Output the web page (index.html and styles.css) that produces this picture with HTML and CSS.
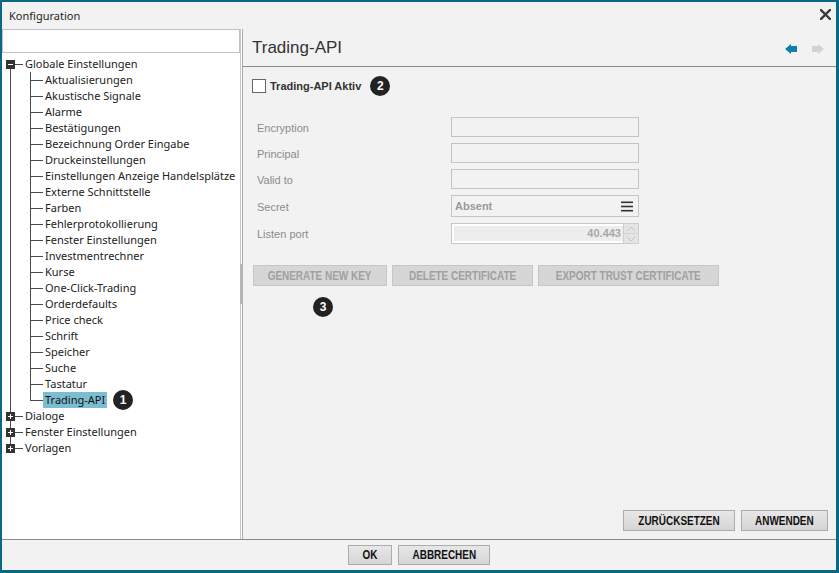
FILE: index.html
```html
<!DOCTYPE html>
<html lang="de">
<head>
<meta charset="utf-8">
<title>Konfiguration</title>
<link rel="stylesheet" href="styles.css">
</head>
<body>
<div class="window">
  <div class="titlebar">
    <span class="title">Konfiguration</span>
    <span class="close" aria-label="Schließen">
      <svg width="11" height="11" viewBox="0 0 11 11"><path d="M1 1 L10 10 M10 1 L1 10" stroke="#3a3a3a" stroke-width="2.4" stroke-linecap="square"/></svg>
    </span>
  </div>
  <div class="main">
    <aside class="left">
      <input class="search" type="text">
      <ul class="tree">
        <li>
          <div class="row"><span class="toggle minus"></span><span class="conn root-conn"></span><span class="label">Globale Einstellungen</span></div>
          <ul class="children">
            <li><div class="row"><span class="conn child-conn"></span><span class="label">Aktualisierungen</span></div></li>
            <li><div class="row"><span class="conn child-conn"></span><span class="label">Akustische Signale</span></div></li>
            <li><div class="row"><span class="conn child-conn"></span><span class="label">Alarme</span></div></li>
            <li><div class="row"><span class="conn child-conn"></span><span class="label">Bestätigungen</span></div></li>
            <li><div class="row"><span class="conn child-conn"></span><span class="label">Bezeichnung Order Eingabe</span></div></li>
            <li><div class="row"><span class="conn child-conn"></span><span class="label">Druckeinstellungen</span></div></li>
            <li><div class="row"><span class="conn child-conn"></span><span class="label">Einstellungen Anzeige Handelsplätze</span></div></li>
            <li><div class="row"><span class="conn child-conn"></span><span class="label">Externe Schnittstelle</span></div></li>
            <li><div class="row"><span class="conn child-conn"></span><span class="label">Farben</span></div></li>
            <li><div class="row"><span class="conn child-conn"></span><span class="label">Fehlerprotokollierung</span></div></li>
            <li><div class="row"><span class="conn child-conn"></span><span class="label">Fenster Einstellungen</span></div></li>
            <li><div class="row"><span class="conn child-conn"></span><span class="label">Investmentrechner</span></div></li>
            <li><div class="row"><span class="conn child-conn"></span><span class="label">Kurse</span></div></li>
            <li><div class="row"><span class="conn child-conn"></span><span class="label">One-Click-Trading</span></div></li>
            <li><div class="row"><span class="conn child-conn"></span><span class="label">Orderdefaults</span></div></li>
            <li><div class="row"><span class="conn child-conn"></span><span class="label">Price check</span></div></li>
            <li><div class="row"><span class="conn child-conn"></span><span class="label">Schrift</span></div></li>
            <li><div class="row"><span class="conn child-conn"></span><span class="label">Speicher</span></div></li>
            <li><div class="row"><span class="conn child-conn"></span><span class="label">Suche</span></div></li>
            <li><div class="row"><span class="conn child-conn"></span><span class="label">Tastatur</span></div></li>
            <li><div class="row"><span class="conn child-conn"></span><span class="label selected">Trading-API</span><span class="badge badge-tree">1</span></div></li>
          </ul>
        </li>
        <li><div class="row"><span class="toggle plus"></span><span class="conn root-conn"></span><span class="label">Dialoge</span></div></li>
        <li><div class="row"><span class="toggle plus"></span><span class="conn root-conn"></span><span class="label">Fenster Einstellungen</span></div></li>
        <li><div class="row"><span class="toggle plus"></span><span class="conn root-conn"></span><span class="label">Vorlagen</span></div></li>
      </ul>
    </aside>
    <div class="splitter"><div class="handle"></div></div>
    <section class="right">
      <header class="rhead">
        <h1 class="rtitle">Trading-API</h1>
        <div class="nav">
          <svg class="arrow" width="12" height="10" viewBox="0 0 12 10"><path d="M0 5 L6 0 L6 2 L12 2 L12 8 L6 8 L6 10 Z" fill="#0a80b0"/></svg>
          <svg class="arrow" width="12" height="10" viewBox="0 0 12 10"><path d="M12 5 L6 0 L6 2 L0 2 L0 8 L6 8 L6 10 Z" fill="#d2d2d2"/></svg>
        </div>
      </header>
      <div class="content">
        <div class="check-row">
          <span class="checkbox"></span>
          <span class="check-label">Trading-API Aktiv</span>
          <span class="badge badge-check">2</span>
        </div>
        <div class="form">
          <span class="flabel">Encryption</span><span class="field"></span>
          <span class="flabel">Principal</span><span class="field"></span>
          <span class="flabel">Valid to</span><span class="field"></span>
          <span class="flabel">Secret</span>
          <span class="field select"><span class="select-text">Absent</span>
            <svg width="12" height="11" viewBox="0 0 12 11"><rect x="0" y="0.5" width="12" height="1.6" fill="#333"/><rect x="0" y="4.7" width="12" height="1.6" fill="#333"/><rect x="0" y="8.9" width="12" height="1.6" fill="#333"/></svg>
          </span>
          <span class="flabel">Listen port</span>
          <span class="spinner">
            <span class="spin-field"><span class="spin-value">40.443</span></span>
            <span class="spin-buttons">
              <span class="spin-btn"><svg width="10" height="6" viewBox="0 0 10 6"><path d="M1 5 L5 1 L9 5" fill="none" stroke="#c4c4c4" stroke-width="1"/></svg></span>
              <span class="spin-btn"><svg width="10" height="6" viewBox="0 0 10 6"><path d="M1 1 L5 5 L9 1" fill="none" stroke="#c4c4c4" stroke-width="1"/></svg></span>
            </span>
          </span>
        </div>
        <div class="actions">
          <button class="btn btn-disabled w-gen"><span class="btn-text">GENERATE NEW KEY</span></button>
          <button class="btn btn-disabled w-del"><span class="btn-text">DELETE CERTIFICATE</span></button>
          <button class="btn btn-disabled w-exp"><span class="btn-text">EXPORT TRUST CERTIFICATE</span></button>
        </div>
        <span class="badge badge-actions">3</span>
        <div class="panel-footer">
          <button class="btn btn-normal w-reset"><span class="btn-text">ZURÜCKSETZEN</span></button>
          <button class="btn btn-normal w-apply"><span class="btn-text">ANWENDEN</span></button>
        </div>
      </div>
    </section>
  </div>
  <div class="footer">
    <button class="btn btn-normal w-ok"><span class="btn-text">OK</span></button>
    <button class="btn btn-normal w-cancel"><span class="btn-text">ABBRECHEN</span></button>
  </div>
</div>
</body>
</html>
```

FILE: styles.css
```css
* { box-sizing: border-box; }

html, body {
  margin: 0;
  padding: 0;
  background: #f2f2f2;
}

.window {
  width: 839px;
  height: 573px;
  border-style: solid;
  border-color: #0b6786;
  border-width: 2px 3px 3px 2px;
  background: #f2f2f2;
  display: flex;
  flex-direction: column;
  overflow: hidden;
}

/* Title bar */
.titlebar {
  height: 27px;
  flex: none;
  display: flex;
  align-items: center;
  justify-content: space-between;
  padding: 0 5px 0 7px;
}
.title {
  font: 11px "Noto Sans", sans-serif;
  color: #1e1e1e;
}
.close {
  display: flex;
  width: 11px;
  height: 11px;
  margin-bottom: 2px;
}

/* Main split */
.main {
  height: 510px;
  flex: none;
  display: flex;
}

.left {
  width: 238px;
  flex: none;
  background: #fff;
  display: flex;
  flex-direction: column;
}
.search {
  display: block;
  width: 100%;
  height: 24px;
  margin: 0;
  border: 1px solid #c2c2c2;
  background: #fff;
  outline: none;
}

/* Tree */
.tree, .children {
  list-style: none;
  margin: 0;
  padding: 0;
}
.tree {
  padding-top: 3px;
  font: 11px "Noto Sans", sans-serif;
  color: #222;
}
.tree li {
  position: relative;
}
.tree > li::before,
.children > li::before {
  content: "";
  position: absolute;
  top: 0;
  bottom: 0;
  width: 1px;
  background: #4a4a4a;
}
.tree > li::before { left: 8px; }
.tree > li:first-child::before { top: 8px; }
.tree > li:last-child::before { bottom: auto; height: 8px; }
.children > li::before { left: 28px; }
.children > li:last-child::before { bottom: auto; height: 9px; }

.row {
  display: flex;
  align-items: center;
  height: 16px;
  white-space: nowrap;
}
.children .row { padding-left: 29px; }

.toggle {
  position: relative;
  z-index: 1;
  width: 9px;
  height: 9px;
  margin-left: 4px;
  background: #333;
  flex: none;
}
.toggle::before {
  content: "";
  position: absolute;
  left: 2px;
  top: 4px;
  width: 5px;
  height: 1px;
  background: #fff;
}
.toggle.plus::after {
  content: "";
  position: absolute;
  left: 4px;
  top: 2px;
  width: 1px;
  height: 5px;
  background: #fff;
}
.conn {
  height: 1px;
  background: #4a4a4a;
  flex: none;
}
.root-conn { width: 8px; }
.child-conn { width: 12px; }

.label {
  padding: 0 2px;
  line-height: 16px;
  height: 16px;
}
.label.selected {
  background: #7dbdd1;
  color: #111;
}

/* Badges */
.badge {
  display: inline-flex;
  align-items: center;
  justify-content: center;
  width: 20px;
  height: 20px;
  border-radius: 50%;
  background: #222;
  color: #fff;
  font: bold 12px "Liberation Sans", Arial, sans-serif;
  flex: none;
}
.badge-tree { margin-left: 6px; }
.badge-check { margin-left: 9px; }
.badge-actions {
  align-self: flex-start;
  margin: 11px 0 0 61px;
}

/* Splitter */
.splitter {
  width: 3px;
  flex: none;
  display: flex;
  flex-direction: column;
  justify-content: center;
  background: linear-gradient(to right, #c8c8c8 0 1px, #ffffff 1px 2px, #ababab 2px 3px);
}
.handle {
  height: 40px;
  background: #b6b6b6;
}

/* Right panel */
.right {
  flex: 1;
  display: flex;
  flex-direction: column;
  min-width: 0;
}
.rhead {
  height: 38px;
  flex: none;
  display: flex;
  align-items: center;
  justify-content: space-between;
  padding: 0 12px 0 9px;
  border-bottom: 1px solid #8a8a8a;
}
.rtitle {
  margin: 0;
  font: normal 17px "Liberation Sans", Arial, sans-serif;
  color: #333;
  padding-top: 1px;
}
.nav {
  display: flex;
  gap: 15px;
  padding-top: 2px;
}
.arrow { display: block; }

.content {
  flex: 1;
  display: flex;
  flex-direction: column;
  padding: 9px 8px 8px 9px;
}

.check-row {
  display: flex;
  align-items: center;
  height: 20px;
}
.checkbox {
  width: 14px;
  height: 14px;
  border: 1px solid #666;
  background: #fff;
  margin-right: 4px;
}
.check-label {
  font: bold 11px "Liberation Sans", Arial, sans-serif;
  color: #333;
}

.form {
  margin-top: 21px;
  display: grid;
  grid-template-columns: 199px 188px;
  row-gap: 6px;
  align-items: center;
}
.flabel {
  padding-left: 5px;
  padding-top: 1px;
  font: 11px "Liberation Sans", Arial, sans-serif;
  color: #8c8c8c;
}
.field {
  height: 20px;
  border: 1px solid #c4c4c4;
  background: #f2f2f2;
}
.field.select {
  height: 22px;
  display: flex;
  align-items: center;
  justify-content: space-between;
  padding: 0 5px 0 3px;
}
.select-text {
  font: bold 11px "Liberation Sans", Arial, sans-serif;
  color: #9a9a9a;
}
.field.select svg { display: block; }

.spinner {
  height: 21px;
  display: flex;
}
.spin-field {
  flex: 1;
  border: 1px solid #c8c8c8;
  border-right: none;
  background: #fff;
  padding: 2px 0 2px 2px;
  display: flex;
}
.spin-value {
  flex: 1;
  background: #ededed;
  text-align: right;
  padding-right: 2px;
  font: bold 11px "Liberation Sans", Arial, sans-serif;
  line-height: 15px;
  color: #a8a8a8;
}
.spin-buttons {
  width: 16px;
  display: flex;
  flex-direction: column;
  border: 1px solid #cdcdcd;
  background: #e4e4e4;
}
.spin-btn {
  flex: 1;
  display: flex;
  align-items: center;
  justify-content: center;
}
.spin-btn + .spin-btn { border-top: 1px solid #d4d4d4; }
.spin-btn svg { display: block; }

/* Buttons */
.btn {
  height: 21px;
  margin: 0;
  padding: 0;
  font: bold 12px "Liberation Sans", Arial, sans-serif;
  text-align: center;
  white-space: nowrap;
  overflow: hidden;
  cursor: default;
}
.btn-text {
  display: inline-block;
  transform: scaleX(0.83);
}
.btn-disabled {
  border: 1px solid #c6c6c6;
  background: #d6d6d6;
  color: #a0a0a0;
}
.btn-normal {
  border: 1px solid #acacac;
  background: linear-gradient(#e7e7e7, #d5d5d5);
  color: #111;
}

.actions {
  margin-top: 21px;
  padding-left: 1px;
  display: flex;
  gap: 5px;
}
.w-gen { width: 134px; }
.w-del { width: 141px; }
.w-exp { width: 181px; }

.panel-footer {
  margin-top: auto;
  display: flex;
  justify-content: flex-end;
  gap: 6px;
}
.w-reset { width: 112px; }
.w-apply { width: 87px; }

.footer {
  flex: 1;
  border-top: 1px solid #8a8a8a;
  display: flex;
  justify-content: center;
  align-items: flex-start;
  gap: 6px;
  padding-top: 5px;
}
.footer .btn { height: 20px; }
.w-ok { width: 44px; }
.w-cancel { width: 92px; }
```
